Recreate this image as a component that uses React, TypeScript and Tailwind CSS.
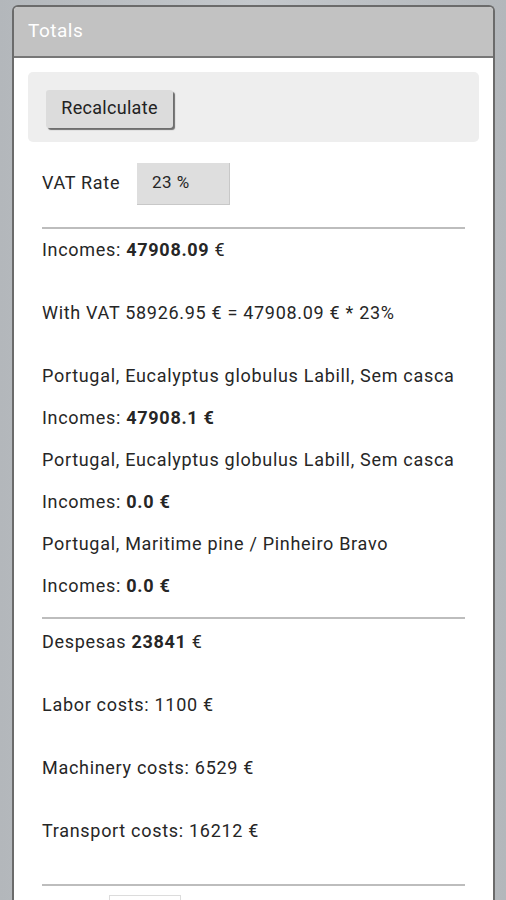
import React from "react";

function Line({ children, className = "" }: { children: React.ReactNode; className?: string }) {
  return <div className={"h-[42px] pb-[4px] flex items-center text-[18px] tracking-[0.7px] " + className}>{children}</div>;
}

export default function App() {
  return (
    <div
      className="w-[506px] h-[900px] overflow-hidden bg-gradient-to-r from-[#b3b7bb] via-[#c4c8cc] to-[#b3b7bb] pt-[5px] pl-[12px] text-[#262626]"
      style={{ fontFamily: "Roboto, 'Noto Sans', sans-serif" }}
    >
      <div className="w-[483px] h-[1000px] border-x-2 border-t-2 border-[#6b6b6b] rounded-t-[6px] bg-white overflow-hidden">
        <div className="h-[51px] bg-[#c2c2c2] border-b-2 border-[#777] flex items-center pl-[14px]">
          <span className="text-white text-[19px] tracking-[0.5px]">Totals</span>
        </div>
        <div className="px-[14px] pt-[14px]">
          <div className="h-[70px] bg-[#eeeeee] rounded-[5px] pl-[18px] pt-[18px]">
            <button className="w-[127px] h-[38px] pb-[3px] bg-[#dcdcdc] rounded-[3px] shadow-[2px_2px_1px_#6e6e6e] text-[18px] tracking-[0.3px] text-[#222]">
              Recalculate
            </button>
          </div>
          <div className="px-[14px]">
            <div className="flex items-center mt-[21px] h-[42px]">
              <span className="text-[18px] tracking-[0.7px] w-[95px] pb-[4px]">VAT Rate</span>
              <div className="w-[93px] h-[42px] bg-[#dedede] border-b border-r border-[#c8c8c8] flex items-center pl-[15px] pb-[2px] text-[17px] tracking-[0.5px]">
                23 %
              </div>
            </div>
            <div className="mt-[22px] h-[2px] bg-[#bdbdbd]" />
            <Line className="mt-[1px]">
              <span>Incomes:&nbsp;</span>
              <span className="font-bold">47908.09</span>
              <span>&nbsp;€</span>
            </Line>
            <Line className="mt-[21px]">With VAT 58926.95 € = 47908.09 € * 23%</Line>
            <Line className="mt-[21px]">Portugal, Eucalyptus globulus Labill, Sem casca</Line>
            <Line>
              <span>Incomes:&nbsp;</span>
              <span className="font-bold">47908.1 €</span>
            </Line>
            <Line>Portugal, Eucalyptus globulus Labill, Sem casca</Line>
            <Line>
              <span>Incomes:&nbsp;</span>
              <span className="font-bold">0.0 €</span>
            </Line>
            <Line>Portugal, Maritime pine / Pinheiro Bravo</Line>
            <Line>
              <span>Incomes:&nbsp;</span>
              <span className="font-bold">0.0 €</span>
            </Line>
            <div className="mt-[9px] h-[2px] bg-[#bdbdbd]" />
            <Line className="mt-[3px]">
              <span>Despesas&nbsp;</span>
              <span className="font-bold">23841</span>
              <span>&nbsp;€</span>
            </Line>
            <Line className="mt-[21px]">Labor costs: 1100 €</Line>
            <Line className="mt-[21px]">Machinery costs: 6529 €</Line>
            <Line className="mt-[21px]">Transport costs: 16212 €</Line>
            <div className="mt-[31px] h-[2px] bg-[#bdbdbd]" />
            <div className="flex items-start mt-[9px]">
              <span className="w-[67px]">&nbsp;</span>
              <div className="w-[72px] h-[42px] bg-white border border-[#dcdcdc]" />
            </div>
          </div>
        </div>
      </div>
    </div>
  );
}
